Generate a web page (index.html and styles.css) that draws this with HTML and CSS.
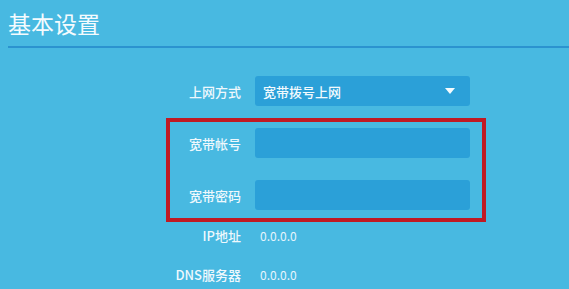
FILE: index.html
```html
<!DOCTYPE html>
<html lang="zh-CN">
<head>
<meta charset="utf-8">
<title>基本设置</title>
<link rel="stylesheet" href="styles.css">
</head>
<body>
<div class="page">
  <h1 class="title">基本设置</h1>
  <div class="divider"></div>
  <div class="form">
    <div class="row">
      <div class="label">上网方式</div>
      <div class="select"><span>宽带拨号上网</span><span class="arrow"></span></div>
    </div>
    <div class="row gap-l">
      <div class="label">宽带帐号</div>
      <div class="input"></div>
    </div>
    <div class="row gap-l">
      <div class="label">宽带密码</div>
      <div class="input"></div>
    </div>
    <div class="row gap-s">
      <div class="label">IP地址</div>
      <div class="value">0.0.0.0</div>
    </div>
    <div class="row gap-xs">
      <div class="label">DNS服务器</div>
      <div class="value">0.0.0.0</div>
    </div>
    <div class="highlight"></div>
  </div>
</div>
</body>
</html>
```
FILE: styles.css
```css
html, body {
  margin: 0;
  padding: 0;
  background: #48b9e1;
}
.page {
  width: 569px;
  height: 289px;
  overflow: hidden;
  background: #48b9e1;
  font-family: "Noto Sans CJK SC", "Microsoft YaHei", sans-serif;
  color: #eef8fd;
}
.title {
  margin: 0;
  padding: 8px 0 0 8px;
  height: 38px;
  box-sizing: border-box;
  font-size: 23px;
  font-weight: 400;
  line-height: 30px;
  color: #f4fbfe;
}
.divider {
  margin-left: 8px;
  height: 2px;
  background: #2b93cf;
  margin-top: 8px;
}
.form {
  position: relative;
  margin-top: 28px;
  display: flex;
  flex-direction: column;
}
.row {
  display: flex;
  align-items: center;
  height: 30px;
}
.gap-l { margin-top: 22px; }
.gap-s { margin-top: 10px; }
.gap-xs { margin-top: 9px; }
.label {
  width: 241px;
  text-align: right;
  font-size: 13px;
  font-weight: 500;
  color: #eef8fd;
  margin-right: 14px;
}
.select, .input {
  width: 215px;
  height: 30px;
  background: #2ba0d8;
  border-radius: 3px;
  box-sizing: border-box;
}
.select {
  display: flex;
  align-items: center;
  justify-content: space-between;
  padding: 0 15px 0 8px;
  font-size: 13px;
  font-weight: 500;
  color: #f2fafe;
}
.arrow {
  width: 0;
  height: 0;
  border-left: 5px solid transparent;
  border-right: 5px solid transparent;
  border-top: 6px solid #f4fbfe;
}
.value {
  margin-left: 5px;
  font-size: 12px;
  color: #e6f5fc;
}
.highlight {
  position: absolute;
  left: 166px;
  top: 42px;
  width: 320px;
  height: 104px;
  box-sizing: border-box;
  border: 4px solid #c01a24;
}
```
